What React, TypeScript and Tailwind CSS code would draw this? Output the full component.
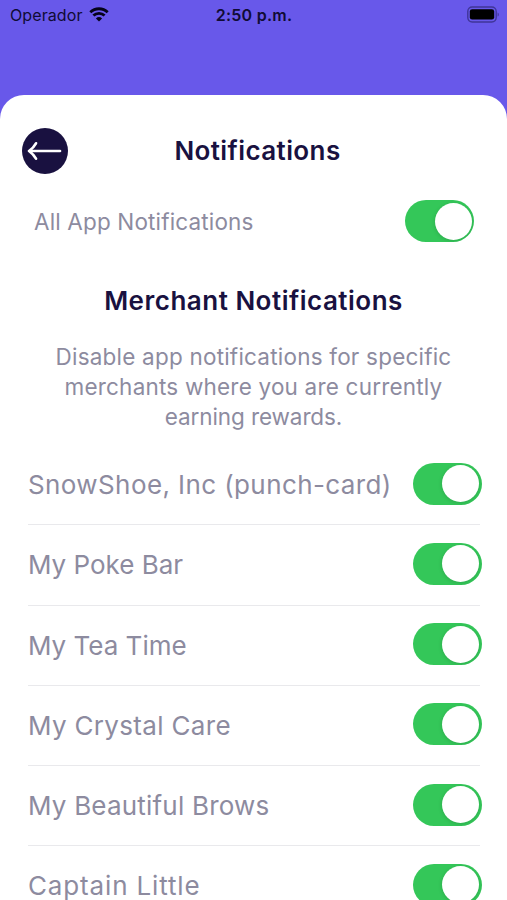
import { useState } from "react";

type Merchant = {
  name: string;
  tracking: string;
};

const MERCHANTS: Merchant[] = [
  { name: "SnowShoe, Inc (punch-card)", tracking: "tracking-[0.4px]" },
  { name: "My Poke Bar", tracking: "tracking-[0px]" },
  { name: "My Tea Time", tracking: "tracking-[0px]" },
  { name: "My Crystal Care", tracking: "tracking-[0.33px]" },
  { name: "My Beautiful Brows", tracking: "tracking-[0.2px]" },
  { name: "Captain Little", tracking: "tracking-[0.85px]" },
];

function Toggle({ label }: { label: string }) {
  const [enabled, setEnabled] = useState(true);

  return (
    <button
      type="button"
      role="switch"
      aria-checked={enabled}
      aria-label={label}
      onClick={() => setEnabled(!enabled)}
      className={`flex h-[42px] w-[69px] shrink-0 items-center overflow-hidden rounded-full px-[2.5px] ${
        enabled ? "justify-end bg-[#34c759]" : "justify-start bg-gray-200"
      }`}
    >
      <span className="size-[37px] rounded-full bg-white shadow-[0_1px_4px_rgba(0,0,0,0.15)]" />
    </button>
  );
}

function StatusBar() {
  return (
    <div className="grid h-[30px] shrink-0 grid-cols-3 items-center pr-[7px] pl-[10px] text-[16px] text-[#100b35]">
      <div className="flex items-center gap-[6px]">
        <span className="tracking-[0.1px]">Operador</span>
        <svg viewBox="0 0 20 15" className="mb-px h-[15px] w-[20px]" fill="none">
          <path
            d="M1.3 5.3a12.4 12.4 0 0 1 17.4 0M4.4 8.6a8 8 0 0 1 11.2 0"
            stroke="#05031a"
            strokeWidth="2.8"
          />
          <path d="M10 14.6 6.9 11.5a4.5 4.5 0 0 1 6.2 0Z" fill="#05031a" />
        </svg>
      </div>
      <span className="pr-[2px] text-center font-semibold tracking-[0.25px]">
        2:50 p.m.
      </span>
      <svg
        viewBox="0 0 33 17"
        className="mb-[2px] h-[17px] w-[33px] justify-self-end"
        fill="none"
      >
        <rect
          x="0.8"
          y="1"
          width="28.4"
          height="15"
          rx="4.4"
          stroke="#3f3598"
          strokeWidth="1.4"
        />
        <rect x="2.8" y="3.2" width="24.4" height="10.4" rx="2.4" fill="#000" />
        <path d="M30.6 6.4c1.6.6 1.6 3.6 0 4.2Z" fill="#3f3598" />
      </svg>
    </div>
  );
}

export default function App() {
  return (
    <div className="flex h-[900px] w-[507px] flex-col overflow-hidden bg-[#6858ea] font-['Inter',sans-serif]">
      <StatusBar />

      <main className="mt-[65px] min-h-0 flex-1 overflow-hidden rounded-t-[24px] bg-white">
        <header className="grid h-[111px] grid-cols-[46px_1fr_46px] items-center px-[22px]">
          <button
            type="button"
            aria-label="Back"
            className="flex size-[46px] items-center justify-center rounded-full bg-[#191140]"
          >
            <svg
              viewBox="0 0 46 46"
              className="size-[46px]"
              fill="none"
              stroke="#fff"
              strokeWidth="2.7"
              strokeLinecap="round"
              strokeLinejoin="round"
            >
              <path d="M38 23H8M14 15.3 Q11.5 19.8 7 23 Q11.5 26.2 14 30.7" />
            </svg>
          </button>
          <h1 className="pl-[8px] text-center text-[26px] font-semibold tracking-[0.4px] text-[#191140]">
            Notifications
          </h1>
        </header>

        <div className="-mt-[6px] flex h-[42px] items-center justify-between pr-[33px] pl-[34px]">
          <span className="pt-[2px] text-[22.5px] tracking-[0.15px] text-[#8d8b9f]">
            All App Notifications
          </span>
          <Toggle label="All App Notifications" />
        </div>

        <h2 className="mt-[41px] text-center text-[26px] leading-[36px] font-semibold tracking-[0.5px] text-[#191140]">
          Merchant Notifications
        </h2>

        <p className="mt-[23px] text-center text-[22.5px] leading-[30px] text-[#8d8b9f]">
          <span className="block tracking-[0.21px]">
            Disable app notifications for specific
          </span>
          <span className="block tracking-[0.2px]">
            merchants where you are currently
          </span>
          <span className="block tracking-[-0.1px]">earning rewards.</span>
        </p>

        <ul className="mt-[13px] pr-[27px] pl-[28px]">
          {MERCHANTS.map((merchant) => (
            <li
              key={merchant.name}
              className="flex h-[80.25px] items-center justify-between border-b border-[#e9e9ec]"
            >
              <span
                className={`text-[26px] whitespace-nowrap text-[#8d8b9f] ${merchant.tracking}`}
              >
                {merchant.name}
              </span>
              <div className="-mt-[2px] -mr-[1.5px]">
                <Toggle label={merchant.name} />
              </div>
            </li>
          ))}
        </ul>
      </main>
    </div>
  );
}
